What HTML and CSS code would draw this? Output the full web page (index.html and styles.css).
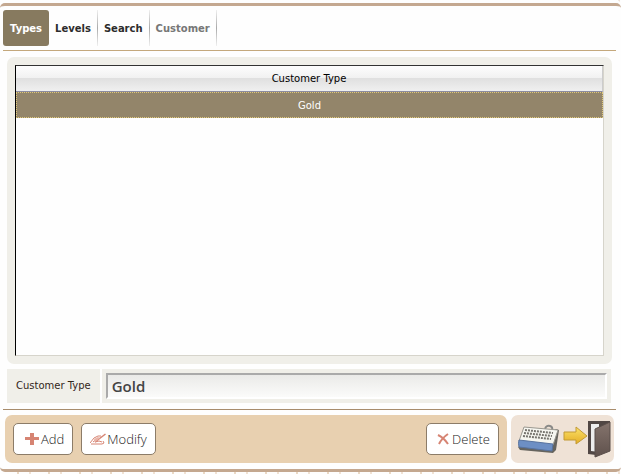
FILE: index.html
```html
<!DOCTYPE html>
<html lang="en">
<head>
    <meta charset="UTF-8">
    <meta name="viewport" content="width=device-width, initial-scale=1.0">
    <title>Customer Types</title>
    <link rel="stylesheet" href="styles.css">
</head>
<body>
    <div class="window">
        <nav class="tabs">
            <a href="#types" class="tab active">Types</a>
            <a href="#levels" class="tab">Levels</a>
            <a href="#search" class="tab">Search</a>
            <a href="#customer" class="tab disabled">Customer</a>
        </nav>

        <div class="panel">
            <div class="list">
                <table>
                    <thead>
                        <tr><th>Customer Type</th></tr>
                    </thead>
                    <tbody>
                        <tr class="selected"><td>Gold</td></tr>
                    </tbody>
                </table>
            </div>
        </div>

        <div class="field">
            <label for="customerType">Customer Type</label>
            <div class="field-input">
                <input type="text" id="customerType" value="Gold">
            </div>
        </div>

        <footer class="footer">
            <div class="actions">
                <button type="button" class="btn">
                    <svg width="18" height="14" viewBox="0 0 18 14"><path d="M8 1h4v4h5v3h-5v5H8V8H3V5h5z" fill="#d68473"/></svg>
                    Add
                </button>
                <button type="button" class="btn">
                    <svg width="16" height="14" viewBox="0 0 16 14" fill="none" stroke="#d68473"><path d="M15.500 2L5 10" stroke-width="1.500"/><path d="M1 12h11l2-1-1-2M0 11l4-5 4-2h3M3 10l5-4M5 10l4-1 3 1"/><path d="M4 7l4-2 2 1-5 4z" fill="#eab5a9" stroke="none"/></svg>
                    Modify
                </button>
                <button type="button" class="btn delete">
                    <svg width="16" height="14" viewBox="0 0 16 14"><path d="M3 3Q9 6 13 12M13 2Q7 6 4 12" fill="none" stroke="#d68473" stroke-width="2"/></svg>
                    Delete
                </button>
            </div>
            <div class="tools">
                <button type="button" class="icon-btn" aria-label="Keyboard">
                    <svg width="42" height="30" viewBox="0 0 42 30">
                        <path d="M28 5q1-4 5-3 3 1 2 4" fill="none" stroke="#8a8a88" stroke-width="2"/>
                        <path d="M1 23l2 3 33 3 3-3 3-20-3-1z" fill="#66645e"/>
                        <path d="M7 3l34 3-5 15L2 17z" fill="#f6f6f0" stroke="#9a9890"/>
                        <path d="M2 16l34 4-1 7-33-4q-1-4 0-7z" fill="#6d8fc4" stroke="#58739f"/>
                        <path d="M8 6l28 3M7 9l28 3M6 12l28 3" stroke="#77756f" stroke-width="2" stroke-dasharray="2 1"/>
                    </svg>
                </button>
                <button type="button" class="icon-btn" aria-label="Exit">
                    <svg width="48" height="40" viewBox="0 0 48 40">
                        <defs>
                            <linearGradient id="arrow" x2="0" y2="1">
                                <stop offset="0" stop-color="#fbe26a"/>
                                <stop offset="1" stop-color="#e5ad25"/>
                            </linearGradient>
                            <linearGradient id="door" x2="0" y2="1">
                                <stop offset="0" stop-color="#85746d"/>
                                <stop offset="1" stop-color="#5f514c"/>
                            </linearGradient>
                        </defs>
                        <path d="M1 13h12V8l11 9-11 8v-4H1z" fill="url(#arrow)" stroke="#c29a35"/>
                        <path d="M25 2h22v3L33 36l-8-1z" fill="#514744"/>
                        <path d="M28 5h8v28l-8-1z" fill="#ededed"/>
                        <path d="M32 10L47 3v29l-15 6z" fill="url(#door)" stroke="#5b4f4a"/>
                    </svg>
                </button>
            </div>
        </footer>
    </div>
</body>
</html>
```

FILE: styles.css
```css
* {
    box-sizing: border-box;
}

body {
    margin: 0;
    padding: 3px 0 2px;
    height: 100vh;
    background: repeating-linear-gradient(90deg, #fefefe 0 17px, #ead9c6 17px 19px, #fefefe 19px 29px, #f0e2d4 29px 31px);
    font-family: "DejaVu Sans", sans-serif;
    font-size: 10px;
    color: #33261a;
}

.window {
    display: flex;
    flex-direction: column;
    height: 100%;
    padding: 4px 5px 6px 3px;
    border-top: 3px solid #c4a890;
    border-bottom: 3px solid #c4a890;
    border-radius: 5px;
    background: #fefefe;
    box-shadow: 0 -3px #fefefe;
}

.tabs {
    display: flex;
    padding-bottom: 4px;
    border-bottom: 1px solid #c4a87c;
}

.tab {
    height: 36px;
    padding: 0 6px;
    border-right: 1px solid;
    border-image: linear-gradient(#f4f4f4, #aaa, #f4f4f4) 1;
    line-height: 38px;
    font-weight: bold;
    color: #2c2c2c;
    text-decoration: none;
}

.tab.active {
    padding: 0 7px;
    border: none;
    border-radius: 3px;
    background: #877a5f;
    color: #fff;
}

.tab.disabled {
    color: #777;
}

.panel {
    display: flex;
    flex: 1;
    margin: 6px 4px 5px;
    padding: 8px;
    border-radius: 7px;
    background: #f0efe9;
}

.list {
    flex: 1;
    border: 1px solid #d6d4cb;
    border-top-color: #333;
    border-left-color: #000;
    background: #fefefe;
}

table {
    width: 100%;
    border-collapse: separate;
    border-spacing: 0;
}

th,
td {
    height: 26px;
    padding: 0;
    font-weight: normal;
    text-align: center;
}

th {
    background: linear-gradient(#fdfdfd, #f1f1f1 48%, #e0e0e0 50%, #f0f0f0);
    border-right: 1px solid #ccc;
    border-bottom: 1px solid #8c8ca0;
    color: #000;
}

.selected td {
    border: 1px dotted #e0c878;
    background: #93856a;
    color: #fff;
}

.field {
    display: flex;
    gap: 2px;
    margin: 0 5px 6px 4px;
}

.field label {
    padding: 0 9px;
    background: #f0efe9;
    line-height: 34px;
}

.field-input {
    flex: 1;
    padding: 4px;
    background: #f0efe9;
}

input {
    display: block;
    width: 100%;
    height: 26px;
    padding: 0 4px;
    border: 2px solid #fff;
    border-top-color: #aaa;
    border-left-color: #aaa;
    background: linear-gradient(#eaeae8, #fbfbfa);
    font: 600 15px "Open Sans", sans-serif;
    color: #444;
}

.footer {
    display: flex;
    gap: 4px;
    padding: 5px 2px 0;
    border-top: 1px solid #a88c6c;
}

.actions {
    display: flex;
    flex: 1;
    gap: 8px;
    padding: 8px;
    border-radius: 7px;
    background: #e8d0b0;
}

.btn {
    display: flex;
    align-items: center;
    gap: 1px;
    height: 32px;
    padding: 0 8px;
    border: 1px solid #8c7c68;
    border-radius: 5px;
    background: #fff;
    font: 300 13px "Open Sans", sans-serif;
    color: #222;
}

.btn.delete {
    margin-left: auto;
}

.tools {
    display: flex;
    align-items: center;
    gap: 4px;
    padding: 0 3px 0 6px;
    border-radius: 7px;
    background: #efe2d6;
}

.icon-btn {
    padding: 0;
    border: none;
    background: none;
}

.icon-btn svg {
    display: block;
}
```
